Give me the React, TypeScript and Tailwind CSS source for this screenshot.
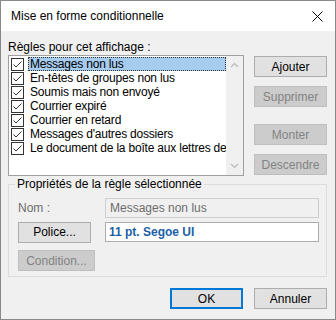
import React from "react";

const items = [
  "Messages non lus",
  "En-têtes de groupes non lus",
  "Soumis mais non envoyé",
  "Courrier expiré",
  "Courrier en retard",
  "Messages d'autres dossiers",
  "Le document de la boîte aux lettres de",
];

function Check() {
  return (
    <svg width="13" height="13" viewBox="0 0 13 13" className="shrink-0">
      <rect x="0.5" y="0.5" width="12" height="12" fill="#ffffff" stroke="#333333" />
      <path d="M2.5 6.5 L5 9 L10.5 3.5" fill="none" stroke="#333333" strokeWidth="1" />
    </svg>
  );
}

function Btn({ children, disabled, primary, className = "" }: { children: React.ReactNode; disabled?: boolean; primary?: boolean; className?: string }) {
  const base = "flex items-center justify-center h-[21px] w-[73px] text-[12px] leading-none";
  const style = disabled
    ? "bg-[#cccccc] border border-[#bfbfbf] text-[#838383]"
    : primary
    ? "bg-[#e1e1e1] border-2 border-[#0078d7] text-black"
    : "bg-[#e1e1e1] border border-[#adadad] text-black";
  return <div className={`${base} ${style} ${className}`}>{children}</div>;
}

export default function App() {
  return (
    <div
      className="w-[336px] h-[320px] border border-[#8a8a8a] bg-[#f0f0f0] flex flex-col overflow-hidden text-[12px] text-black"
      style={{ fontFamily: '"Segoe UI", "Liberation Sans", Arial, sans-serif' }}
    >
      {/* Title bar */}
      <div className="h-[30px] bg-white flex items-center justify-between pl-[10px] pr-[12px] shrink-0">
        <span className="text-[12px] text-black">Mise en forme conditionnelle</span>
        <svg width="11" height="11" viewBox="0 0 11 11">
          <path d="M0.5 0.5 L10.5 10.5 M10.5 0.5 L0.5 10.5" stroke="#000" strokeWidth="1" />
        </svg>
      </div>

      {/* Body */}
      <div className="flex flex-col pl-[7px] pr-[8px] pt-[8px]">
        <div className="flex gap-[10px]">
          <div className="flex flex-col w-[236px]">
            <div className="h-[16px] leading-[16px]">Règles pour cet affichage :</div>
            <div className="h-[121px] border border-[#a0a0a0] bg-white flex">
              <div className="flex-1 flex flex-col pt-[1px] pl-[2px] overflow-hidden">
                {items.map((t, i) => (
                  <div key={t} className="h-[14px] flex items-center">
                    <Check />
                    <div
                      className={
                        "ml-[4px] h-[14px] flex items-center whitespace-nowrap pl-[1px] flex-1 tracking-[-0.2px] " +
                        (i === 0 ? "bg-[#a6ccef] border border-dotted border-[#333]" : "border border-transparent")
                      }
                    >
                      {t}
                    </div>
                  </div>
                ))}
              </div>
              <div className="w-[17px] bg-[#f0f0f0] flex flex-col items-center justify-between py-[6px] shrink-0">
                <svg width="9" height="6" viewBox="0 0 9 6">
                  <path d="M1 5 L4.5 1.5 L8 5" fill="none" stroke="#c0c0c0" strokeWidth="1.5" />
                </svg>
                <svg width="9" height="6" viewBox="0 0 9 6">
                  <path d="M1 1 L4.5 4.5 L8 1" fill="none" stroke="#c0c0c0" strokeWidth="1.5" />
                </svg>
              </div>
            </div>
          </div>
          <div className="flex flex-col pt-[17px]">
            <Btn>Ajouter</Btn>
            <Btn disabled className="mt-[9px]">Supprimer</Btn>
            <Btn disabled className="mt-[17px]">Monter</Btn>
            <Btn disabled className="mt-[9px]">Descendre</Btn>
          </div>
        </div>

        {/* Group */}
        <fieldset className="border border-[#dcdcdc] pl-[9px] pr-[7px] pb-[5px] w-[319px]">
          <legend className="-ml-[3px] px-[2px] h-[16px] leading-[16px]">Propriétés de la règle sélectionnée</legend>
          <div className="flex items-center mt-[6px] h-[20px]">
            <div className="w-[87px] text-[#6d6d6d]">Nom :</div>
            <div className="w-[214px] h-[20px] border border-[#cccccc] bg-[#f0f0f0] text-[#6d6d6d] flex items-center pl-[4px]">
              Messages non lus
            </div>
          </div>
          <div className="flex items-center mt-[4px] h-[20px]">
            <div className="w-[87px]">
              <Btn className="h-[20px]">Police...</Btn>
            </div>
            <div className="w-[214px] h-[20px] border border-[#adadad] bg-white text-[#1c5fa6] font-bold flex items-center pl-[3px]">
              11 pt. Segoe UI
            </div>
          </div>
          <div className="mt-[8px]">
            <Btn disabled className="w-[77px]">Condition...</Btn>
          </div>
        </fieldset>

        <div className="flex justify-end gap-[11px] mt-[11px]">
          <Btn primary>OK</Btn>
          <Btn>Annuler</Btn>
        </div>
      </div>
    </div>
  );
}
